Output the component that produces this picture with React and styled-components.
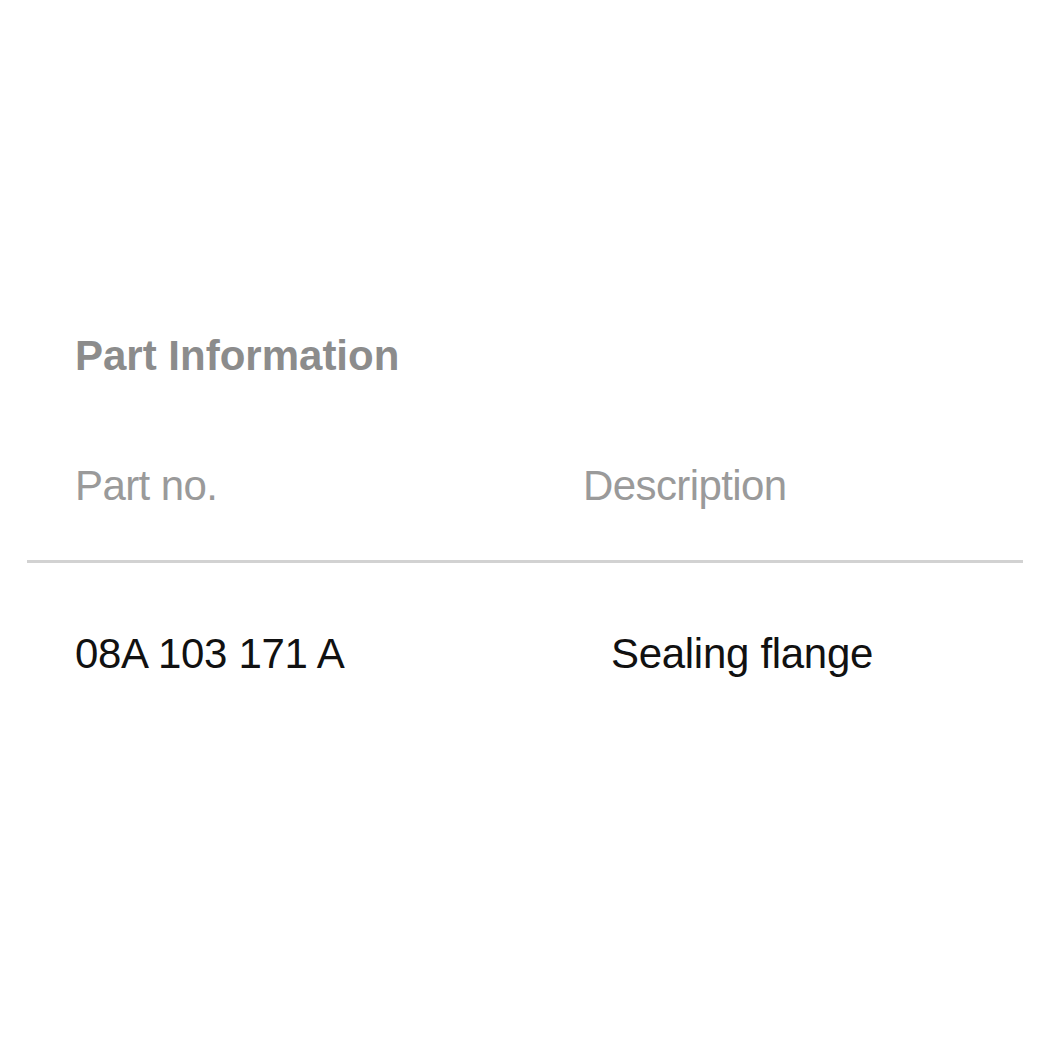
import styled, { createGlobalStyle } from "styled-components";

const GlobalStyle = createGlobalStyle`
  html, body {
    margin: 0;
    padding: 0;
    background: #ffffff;
  }
  body {
    font-family: "Liberation Sans", Arial, sans-serif;
  }
`;

const Page = styled.div`
  width: 1050px;
  height: 1050px;
  padding: 326px 27px 0;
  box-sizing: border-box;
`;

const Title = styled.h2`
  margin: 0 0 0 48px;
  font-size: 42px;
  line-height: 60px;
  font-weight: 700;
  letter-spacing: 0;
  color: #8c8c8c;
`;

const Table = styled.div`
  margin-top: 78px;
`;

const Row = styled.div`
  display: grid;
  grid-template-columns: 508px 1fr;
  padding-left: 48px;
  border-bottom: ${(p) => (p.$head ? "3px solid #d2d2d2" : "none")};
  height: ${(p) => (p.$head ? "96px" : "auto")};
  padding-top: ${(p) => (p.$head ? "0" : "69px")};
`;

const Cell = styled.div`
  font-size: 42px;
  line-height: 44px;
  letter-spacing: ${(p) => (p.$head ? "-0.6px" : "-0.3px")};
  color: ${(p) => (p.$head ? "#9a9a9a" : "#111111")};
  padding-left: ${(p) => p.$indent || 0}px;
`;

export default function App() {
  return (
    <>
      <GlobalStyle />
      <Page>
        <Title>Part Information</Title>
        <Table>
          <Row $head>
            <Cell $head>Part no.</Cell>
            <Cell $head>Description</Cell>
          </Row>
          <Row>
            <Cell>08A 103 171 A</Cell>
            <Cell $indent={28}>Sealing flange</Cell>
          </Row>
        </Table>
      </Page>
    </>
  );
}
